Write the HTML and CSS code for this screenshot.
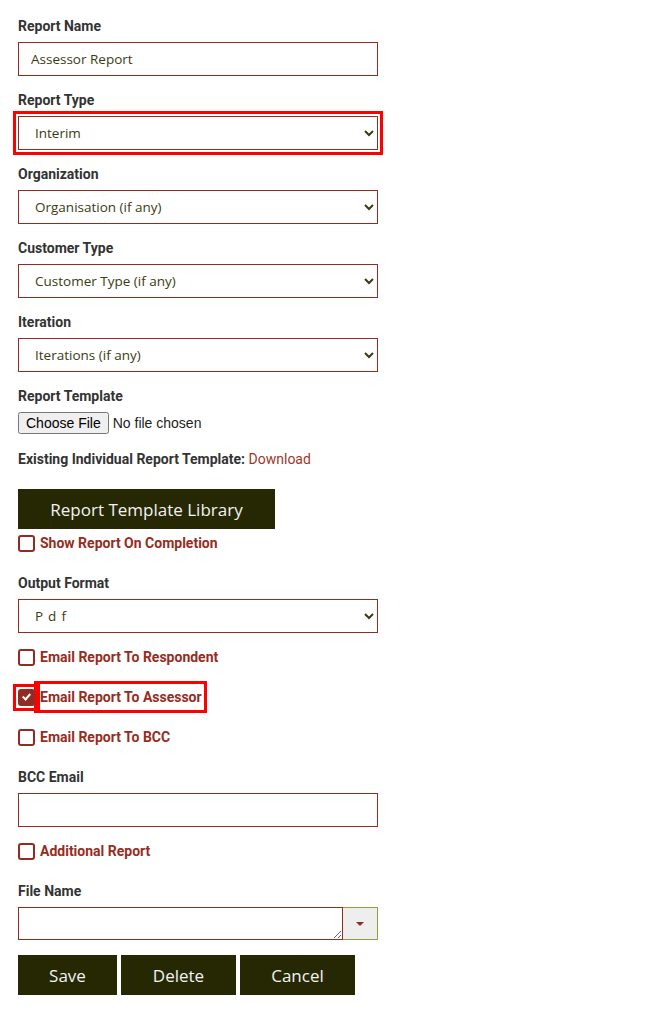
FILE: index.html
```html
<!DOCTYPE html>
<html lang="en">
<head>
    <meta charset="UTF-8">
    <meta name="viewport" content="width=device-width, initial-scale=1.0">
    <title>Report Settings</title>
    <link rel="stylesheet" href="styles.css">
</head>
<body>
    <form class="report-form">
        <div class="field">
            <label class="field-label" for="reportName">Report Name</label>
            <input type="text" class="text-input" id="reportName" value="Assessor Report">
        </div>

        <div class="field">
            <label class="field-label" for="reportType">Report Type</label>
            <select class="select-input highlighted" id="reportType">
                <option>Interim</option>
            </select>
        </div>

        <div class="field">
            <label class="field-label" for="organization">Organization</label>
            <select class="select-input" id="organization">
                <option>Organisation (if any)</option>
            </select>
        </div>

        <div class="field">
            <label class="field-label" for="customerType">Customer Type</label>
            <select class="select-input" id="customerType">
                <option>Customer Type (if any)</option>
            </select>
        </div>

        <div class="field">
            <label class="field-label" for="iteration">Iteration</label>
            <select class="select-input" id="iteration">
                <option>Iterations (if any)</option>
            </select>
        </div>

        <div class="field file-field">
            <label class="field-label" for="reportTemplate">Report Template</label>
            <input type="file" class="file-input" id="reportTemplate">
        </div>

        <p class="existing-template">Existing Individual Report Template: <a href="#">Download</a></p>

        <button type="button" class="dark-button library-button">Report Template Library</button>

        <label class="check-row first-check">
            <input type="checkbox" class="check-box">
            <span>Show Report On Completion</span>
        </label>

        <div class="field">
            <label class="field-label" for="outputFormat">Output Format</label>
            <select class="select-input spaced" id="outputFormat">
                <option>Pdf</option>
            </select>
        </div>

        <label class="check-row">
            <input type="checkbox" class="check-box">
            <span>Email Report To Respondent</span>
        </label>

        <label class="check-row">
            <span class="box-highlight"><input type="checkbox" class="check-box" checked></span>
            <span class="highlighted-text">Email Report To Assessor</span>
        </label>

        <label class="check-row">
            <input type="checkbox" class="check-box">
            <span>Email Report To BCC</span>
        </label>

        <div class="field">
            <label class="field-label" for="bccEmail">BCC Email</label>
            <input type="email" class="text-input" id="bccEmail">
        </div>

        <label class="check-row">
            <input type="checkbox" class="check-box">
            <span>Additional Report</span>
        </label>

        <div class="field">
            <label class="field-label" for="fileName">File Name</label>
            <div class="combo">
                <textarea class="combo-text" id="fileName"></textarea>
                <button type="button" class="combo-toggle"><span class="caret"></span></button>
            </div>
        </div>

        <div class="actions">
            <button type="button" class="dark-button save-button">Save</button>
            <button type="button" class="dark-button">Delete</button>
            <button type="button" class="dark-button">Cancel</button>
        </div>
    </form>
</body>
</html>
```
FILE: styles.css
```css
*, *:before, *:after {
    box-sizing: border-box;
}

body {
    margin: 0;
    background: #fff;
    font-family: 'Roboto', sans-serif;
    color: #333;
}

.report-form {
    width: 396px;
    padding: 16px 18px 20px;
}

.field {
    margin-bottom: 14px;
}

.field-label {
    display: block;
    font-size: 14px;
    line-height: 20px;
    font-weight: 700;
    color: #333;
    margin-bottom: 6px;
}

.text-input, .select-input {
    display: block;
    width: 100%;
    height: 34px;
    border: 1px solid #922b21;
    border-radius: 0;
    background: #fff;
    padding: 0 12px;
    font-family: 'Open Sans', sans-serif;
    font-size: 13.5px;
    color: #3b3b12;
    outline: none;
}

.select-input {
    padding-right: 4px;
}

.select-input.spaced {
    letter-spacing: 5px;
}

.highlighted {
    outline: 3px solid #f00;
    outline-offset: 2px;
}

.file-field {
    margin-bottom: 15px;
}

.file-input {
    display: block;
    font-family: 'Liberation Sans', Arial, sans-serif;
    font-size: 14px;
    color: #222;
}

.existing-template {
    margin: 0 0 20px;
    font-size: 14px;
    line-height: 20px;
    font-weight: 700;
    color: #333;
}

.existing-template a {
    font-weight: 400;
    color: #a0362a;
    text-decoration: none;
}

.dark-button {
    display: block;
    height: 40px;
    border: none;
    border-radius: 0;
    background-color: #252803;
    color: #f2f2f2;
    font-family: 'Open Sans', sans-serif;
    font-size: 17px;
    cursor: pointer;
}

.library-button {
    width: 257px;
    margin-bottom: 4px;
}

.check-row {
    display: flex;
    align-items: center;
    gap: 5px;
    height: 20px;
    margin-bottom: 20px;
    font-size: 14px;
    font-weight: 700;
    color: #962d22;
    cursor: pointer;
}

.check-box {
    appearance: none;
    -webkit-appearance: none;
    position: relative;
    display: block;
    flex: none;
    width: 17px;
    height: 17px;
    margin: 0;
    border: 2px solid #922b21;
    border-radius: 3px;
    background: #fff;
}

.check-box:checked {
    background: #922b21;
}

.check-box:checked::after {
    content: '';
    position: absolute;
    left: 4px;
    top: 1px;
    width: 5px;
    height: 8px;
    border: solid #fff;
    border-width: 0 2.5px 2.5px 0;
    transform: rotate(42deg);
}

.box-highlight {
    display: block;
    flex: none;
    outline: 3px solid #f00;
    outline-offset: 2px;
}

.highlighted-text {
    outline: 3px solid #f00;
    outline-offset: 0;
    padding: 3px 2px 3px 3px;
    margin-left: -3px;
    line-height: 20px;
}

.combo {
    display: flex;
    width: 100%;
    height: 33px;
}

.combo-text {
    flex: 1;
    height: 33px;
    border: 1px solid #922b21;
    border-radius: 0;
    padding: 6px 12px;
    font-family: 'Open Sans', sans-serif;
    font-size: 13px;
    resize: vertical;
    outline: none;
}

.combo-toggle {
    width: 35px;
    height: 33px;
    border: 1px solid #8aa33b;
    border-left: none;
    background: #eee;
    display: flex;
    align-items: center;
    justify-content: center;
    padding: 0;
}

.caret {
    width: 0;
    height: 0;
    border-left: 4px solid transparent;
    border-right: 4px solid transparent;
    border-top: 4px solid #922b21;
}

.actions {
    display: flex;
    gap: 4px;
    margin-top: 15px;
}

.actions .dark-button {
    width: 115px;
}

.actions .save-button {
    width: 99px;
}
```
